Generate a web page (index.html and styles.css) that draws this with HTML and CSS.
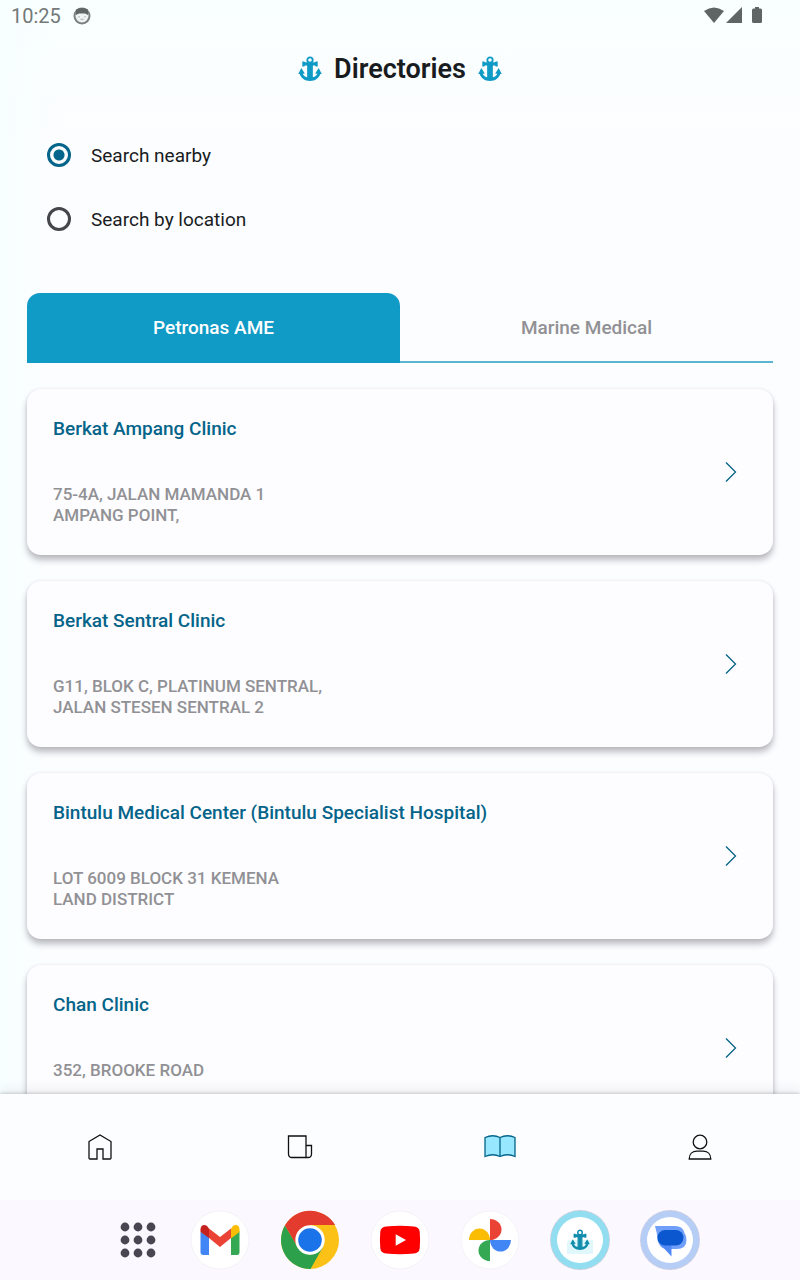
FILE: index.html
```html
<!DOCTYPE html>
<html lang="en">
<head>
<meta charset="utf-8">
<meta name="viewport" content="width=device-width, initial-scale=1">
<title>Directories</title>
<link rel="stylesheet" href="styles.css">
</head>
<body>
<svg class="defs" aria-hidden="true">
  <symbol id="anchor" viewBox="0 0 24 26">
    <circle cx="12" cy="4" r="2.700" fill="none" stroke="currentColor" stroke-width="1.800"/>
    <path fill="currentColor" d="M4.300 5.400h1.900l.8.800h10l.8-.8h1.900v5h-1.900l-.8-.8h-2v11.700c2.100-.6 3.500-1.800 4.200-3.600l-2-.1 3.500-5.600 3.100 6-1.500-.1c-1.300 4.200-5.200 7-10.300 7S3 22.100 1.700 17.900l-1.500.1 3.100-6 3.500 5.600-2 .1c.7 1.800 2.100 3 4.200 3.600V9.600H7l-.8.800H4.300z"/>
    <path d="M9.600 10v11M14.400 10v11" stroke="#fff" stroke-opacity=".35" stroke-width=".5"/>
  </symbol>
  <symbol id="chevron" viewBox="0 0 12 20">
    <path d="M1 .5 10.500 10 1 19.500" fill="none" stroke="currentColor" stroke-width="1.300"/>
  </symbol>
</svg>
<div class="app">
  <div class="status">
    <span class="status-time">10:25</span>
    <svg class="status-cat" viewBox="0 0 18 18" aria-hidden="true"><circle cx="9" cy="9" r="7.500" fill="#eef2f2" stroke="#7a7f80" stroke-width="2"/><path d="M3 2.500Q9-.5 15 2.500V8L12 6.500H6L3 8z" fill="#5f6465"/><path d="M6 9v1.500M12 9v1.500M7.500 12.300h3" stroke="#a5aaab" stroke-width="1"/></svg>
    <svg class="status-system" viewBox="0 0 60 18" aria-hidden="true"><g fill="#5f6465"><path d="M0 4Q10 -3 20 4L10 16z"/><path d="M38 0v16H22z"/><path d="M51 0h4v1.500h1.500a1.500 1.500 0 0 1 1.500 1.500v11.500a1.500 1.500 0 0 1-1.500 1.500h-7a1.500 1.500 0 0 1-1.500-1.500V3a1.500 1.500 0 0 1 1.500-1.500H51z"/></g></svg>
  </div>

  <header class="header">
    <svg class="header-anchor" aria-hidden="true"><use href="#anchor"/></svg>
    <h1>Directories</h1>
    <svg class="header-anchor" aria-hidden="true"><use href="#anchor"/></svg>
  </header>

  <main class="content">
    <div class="search" role="radiogroup" aria-label="Search mode">
      <label class="option"><input type="radio" name="mode" checked><span>Search nearby</span></label>
      <label class="option"><input type="radio" name="mode"><span>Search by location</span></label>
    </div>

    <div class="tabs" role="tablist">
      <button class="tab tab-active" role="tab" aria-selected="true">Petronas AME</button>
      <button class="tab" role="tab" aria-selected="false">Marine Medical</button>
    </div>

    <div class="cards">
      <a class="card" href="#ampang">
        <span class="card-text"><strong class="card-name">Berkat Ampang Clinic</strong><span class="card-address">75-4A, JALAN MAMANDA 1<br>AMPANG POINT,</span></span>
        <svg class="chevron" aria-hidden="true"><use href="#chevron"/></svg>
      </a>
      <a class="card" href="#sentral">
        <span class="card-text"><strong class="card-name">Berkat Sentral Clinic</strong><span class="card-address">G11, BLOK C, PLATINUM SENTRAL,<br>JALAN STESEN SENTRAL 2</span></span>
        <svg class="chevron" aria-hidden="true"><use href="#chevron"/></svg>
      </a>
      <a class="card" href="#bintulu">
        <span class="card-text"><strong class="card-name">Bintulu Medical Center (Bintulu Specialist Hospital)</strong><span class="card-address">LOT 6009 BLOCK 31 KEMENA<br>LAND DISTRICT</span></span>
        <svg class="chevron" aria-hidden="true"><use href="#chevron"/></svg>
      </a>
      <a class="card" href="#chan">
        <span class="card-text"><strong class="card-name">Chan Clinic</strong><span class="card-address">352, BROOKE ROAD</span></span>
        <svg class="chevron" aria-hidden="true"><use href="#chevron"/></svg>
      </a>
    </div>
  </main>

  <nav class="nav" aria-label="Main">
    <a href="#home" aria-label="Home"><svg viewBox="0 0 32 32"><path d="M5 10.500 16 4l11 6.500V27q0 1-1 1h-7V18h-6v10H6q-1 0-1-1z"/></svg></a>
    <a href="#news" aria-label="News"><svg viewBox="0 0 32 32"><path d="M4.500 5H22v21.500H8q-3.500 0-3.500-3.500zM22 14.500h5.500V23q0 3.500-3.500 3.500h-2z"/></svg></a>
    <a class="nav-active" href="#directories" aria-label="Directories" aria-current="page"><svg viewBox="0 0 32 32"><path d="M1 6.500Q9 3 16 6.500 23 3 31 6.500V25.500Q23 22 16 25.500 9 22 1 25.500zM16 6.500v19"/></svg></a>
    <a href="#profile" aria-label="Profile"><svg viewBox="0 0 32 32"><circle cx="16" cy="11" r="6.800"/><path d="M5.200 28c0-5 3.300-7.800 7.800-7.800h6c4.500 0 7.800 2.800 7.800 7.800z"/></svg></a>
  </nav>

  <div class="dock">
    <button class="dock-apps" aria-label="All apps"><svg viewBox="0 0 36 36" fill="#4a4651"><circle cx="5" cy="5" r="4.400"/><circle cx="18" cy="5" r="4.400"/><circle cx="31" cy="5" r="4.400"/><circle cx="5" cy="18" r="4.400"/><circle cx="18" cy="18" r="4.400"/><circle cx="31" cy="18" r="4.400"/><circle cx="5" cy="31" r="4.400"/><circle cx="18" cy="31" r="4.400"/><circle cx="31" cy="31" r="4.400"/></svg></button>
    <button class="dock-item" aria-label="Gmail"><svg viewBox="0 0 60 60"><circle cx="30" cy="30" r="29" fill="#fff" stroke="#f1eff4" stroke-width=".8"/><path d="M10.500 22v20q0 3 3 3H19V27z" fill="#4285f4"/><path d="M41 27v18h6q2.500 0 2.500-3V21z" fill="#34a853"/><path d="M41 18.500v10l8.500-6.500v-2.500c0-4.500-4-5.500-6.500-3.500z" fill="#fbbc04"/><path d="M19 18.500 30 27l11-8.500v9.500L30 37 19 28z" fill="#ea4335"/><path d="M10.500 22v-2.500c0-4.500 4-5.500 6.500-3.500l2 2.500V28z" fill="#c5221f"/></svg></button>
    <button class="dock-item" aria-label="Chrome"><svg viewBox="0 0 60 60"><circle cx="30" cy="30" r="29" fill="#fbc116"/><path d="M30 30V15h25.100A29 29 0 0 0 4.900 15.500L17.400 37z" fill="#e33b2e"/><path d="M4.900 15.500 17.400 37 30 45 43 37 30.500 59H30A29 29 0 0 1 4.900 15.500z" fill="#2da04c"/><circle cx="30" cy="30" r="14.700" fill="#fff"/><circle cx="30" cy="30" r="11.800" fill="#1a73e8"/></svg></button>
    <button class="dock-item" aria-label="YouTube"><svg viewBox="0 0 60 60"><circle cx="30" cy="30" r="29" fill="#fff" stroke="#f1eff4" stroke-width=".8"/><path d="M16 16.500Q30 15 44 16.500 49 17 49.700 21.500 50.500 30 49.700 38.500 49 43 44 43.500 30 45 16 43.500 11 43 10.300 38.500 9.500 30 10.300 21.500 11 17 16 16.500z" fill="red"/><path d="M25.700 24.200v11.600L36 30z" fill="#fff"/></svg></button>
    <button class="dock-item" aria-label="Photos"><svg viewBox="0 0 60 60"><circle cx="30" cy="30" r="29" fill="#fff" stroke="#f1eff4" stroke-width=".8"/><path d="M30 9a11.500 10.500 0 0 1 0 21z" fill="#ea4335"/><path d="M51 30a10.500 11.500 0 0 1-21 0z" fill="#4285f4"/><path d="M30 51a11.500 10.500 0 0 1 0-21z" fill="#34a853"/><path d="M9 30a10.500 11.500 0 0 1 21 0z" fill="#fbbc04"/></svg></button>
    <button class="dock-item dock-marine" aria-label="Marine directory"><svg viewBox="0 0 60 60"><circle cx="30" cy="30" r="30" fill="#cfd0dc"/><circle cx="30" cy="30" r="29.300" fill="#92def0"/><circle cx="30" cy="30" r="23" fill="#fff"/><path d="M19 30h24v14H17V32z" fill="#e0f8fb"/><use href="#anchor" x="20" y="19" width="20" height="22"/></svg></button>
    <button class="dock-item" aria-label="Messages"><svg viewBox="0 0 60 60"><circle cx="30" cy="30" r="30" fill="#cfcfe0"/><circle cx="30" cy="30" r="29.300" fill="#b6cdf6"/><circle cx="30" cy="30" r="23" fill="#fff"/><path d="M15 16h20q8 0 9.500 7Q46.500 26 46.500 30q0 9-10 9H25q-6-2-7.500-9-.5-8-2.500-14z" fill="#6f9ff8"/><path d="M20 34h11.500v12.500z" fill="#5088f5"/><rect x="17.500" y="20" width="26" height="15.500" rx="7.700" fill="#0b57d0"/></svg></button>
  </div>
</div>
</body>
</html>
```

FILE: styles.css
```css
*,
*::before,
*::after {
  box-sizing: border-box;
}

body {
  margin: 0;
  font-family: Roboto, "Liberation Sans", sans-serif;
  color: #191c1e;
  background: #fcfdff;
}

button {
  padding: 0;
  border: 0;
  background: none;
  font: inherit;
}

svg {
  display: block;
}

.defs {
  position: absolute;
  width: 0;
  height: 0;
}

.app {
  display: flex;
  flex-direction: column;
  height: 100vh;
  background: linear-gradient(to right, #f8ffff, rgba(248, 255, 255, 0) 60px),
    linear-gradient(#f9ffff, #fcfdff 150px);
}

.status {
  display: flex;
  align-items: center;
  gap: 12px;
  height: 32px;
  padding: 0 36px 0 11px;
  flex: none;
}

.status-time {
  font-size: 20px;
  color: #747979;
}

.status-cat {
  width: 18px;
  height: 18px;
}

.status-system {
  width: 60px;
  height: 18px;
  margin-left: auto;
}

.header {
  display: flex;
  flex: none;
  align-items: center;
  justify-content: center;
  gap: 12px;
  height: 74px;
}

.header h1 {
  margin: 0;
  font-size: 27px;
  line-height: 32px;
  font-weight: 600;
}

.header-anchor {
  width: 24px;
  height: 26px;
  color: #109ac6;
}

.content {
  flex: 1;
  min-height: 0;
  padding: 17px 27px 0;
  overflow-y: auto;
  scrollbar-width: none;
}

.search {
  padding: 0 20px;
}

.option {
  display: flex;
  align-items: center;
  gap: 20px;
  height: 64px;
  font-size: 19px;
}

.option input {
  appearance: none;
  width: 24px;
  height: 24px;
  margin: 0;
  border: 3px solid #46464a;
  border-radius: 50%;
}

.option input:checked {
  border-color: #046489;
  background: radial-gradient(circle, #046489 5px, transparent 6px) border-box;
}

.tabs {
  display: flex;
  margin-top: 42px;
}

.tab {
  flex: 1;
  height: 70px;
  border-bottom: 2px solid #5db6d0;
  font-size: 19px;
  font-weight: 500;
  color: #919195;
}

.tab-active {
  border-color: #109ac6;
  border-radius: 13px 13px 0 0;
  background: #109ac6;
  color: #fff;
}

.cards {
  display: flex;
  flex-direction: column;
  gap: 26px;
  padding: 26px 0;
}

.card {
  display: flex;
  align-items: center;
  justify-content: space-between;
  min-height: 166px;
  padding: 26px 36px 26px 26px;
  border-radius: 14px;
  background: #fdfdff;
  box-shadow: 0 5px 6px rgba(40, 35, 50, 0.3), 0 0 3px rgba(40, 35, 50, 0.1);
  text-decoration: none;
}

.card-text {
  display: flex;
  flex-direction: column;
  align-self: flex-start;
  gap: 41px;
}

.card-name {
  font-size: 19px;
  line-height: 28px;
  font-weight: 500;
  color: #046489;
}

.card-address {
  font-size: 17px;
  line-height: 21px;
  font-weight: 500;
  color: #919195;
}

.chevron {
  width: 12px;
  height: 20px;
  color: #046489;
}

.nav {
  position: relative;
  display: flex;
  flex: none;
  height: 106px;
  background: #fcfdff;
  box-shadow: 0 -1px 3px rgba(40, 40, 50, 0.2), 0 -4px 12px rgba(40, 40, 50, 0.08);
}

.nav a {
  display: grid;
  flex: 1;
  place-items: center;
}

.nav svg {
  width: 32px;
  height: 32px;
  fill: none;
  stroke: #111;
  stroke-width: 1.3;
}

.nav .nav-active svg {
  fill: #97e7ff;
  stroke: #046489;
}

.dock {
  position: relative;
  display: flex;
  flex: none;
  align-items: center;
  justify-content: center;
  gap: 30px;
  height: 80px;
  padding-left: 16px;
  background: #fbf8ff;
}

.dock-apps {
  display: grid;
  place-items: center;
  width: 44px;
  height: 60px;
}

.dock-apps svg {
  width: 36px;
  height: 36px;
}

.dock-item svg {
  width: 60px;
  height: 60px;
}

.dock-marine {
  color: #118cad;
}
```
